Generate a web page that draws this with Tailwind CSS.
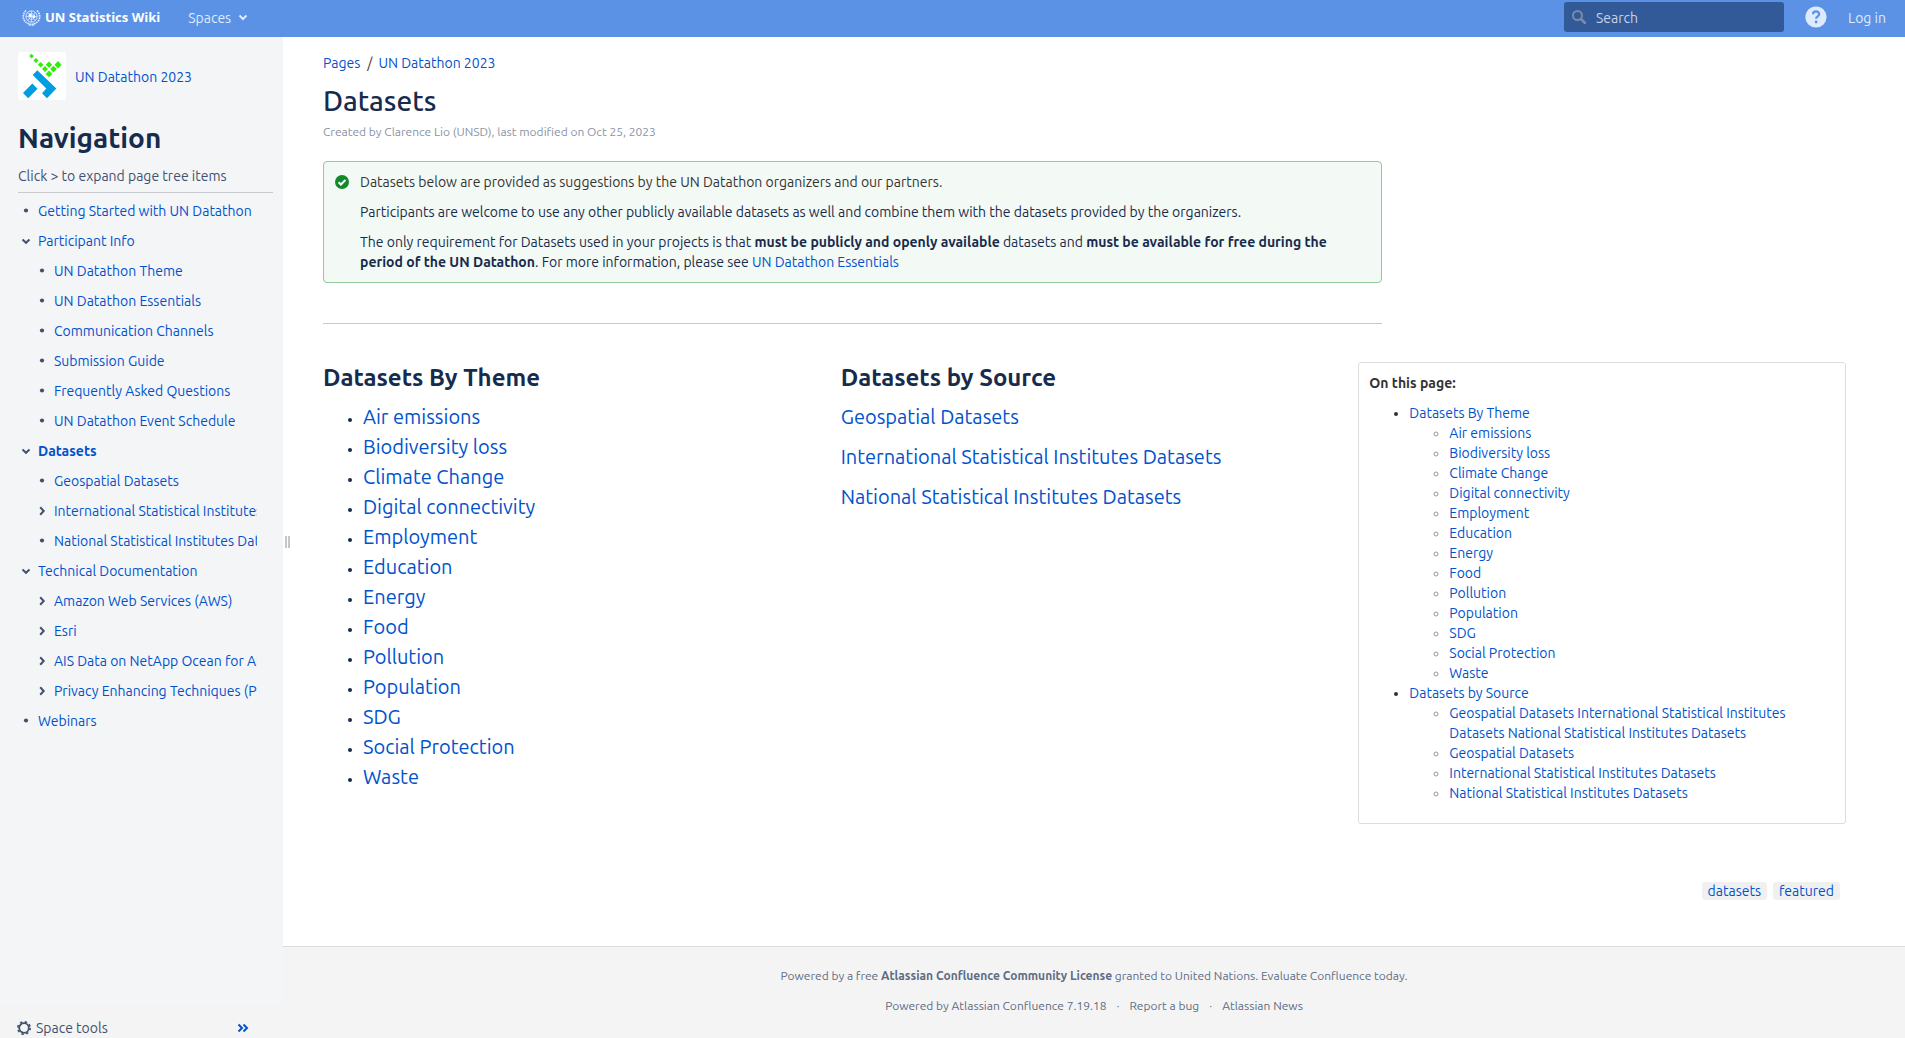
<!DOCTYPE html>
<html lang="en">
<head>
<meta charset="utf-8">
<title>Datasets - UN Datathon 2023 - UN Statistics Wiki</title>
<script src="https://cdn.jsdelivr.net/npm/@tailwindcss/browser@4"></script>
</head>
<body class="flex min-h-screen flex-col bg-white font-['Ubuntu','Noto_Sans',sans-serif] text-sm leading-5 text-[#172b4d]">

<svg class="hidden" aria-hidden="true">
  <symbol id="down" viewBox="0 0 10 10"><path d="M1.5 3.5 5 6.8 8.5 3.5" fill="none" stroke="currentColor" stroke-width="2"/></symbol>
  <symbol id="right" viewBox="0 0 10 10"><path d="M3.2 1.2 6.700 5 3.2 8.8" fill="none" stroke="currentColor" stroke-width="2"/></symbol>
  <symbol id="dot" viewBox="0 0 10 10"><circle cx="5" cy="4.5" r="2.1" fill="currentColor"/></symbol>
</svg>

<header class="flex h-[37px] items-center bg-[#5b92e5] text-[#deebff]">
  <a href="#" class="mb-[3px] flex items-center gap-1 pl-[22px] font-['Open_Sans',sans-serif] text-[13px] font-bold text-white">
    <svg class="h-[17px] w-[19px]" viewBox="0 0 19 17" fill="none" stroke="#deebff" aria-hidden="true">
      <circle cx="9.5" cy="7.5" r="5.6"/><circle cx="9.5" cy="7.5" r="3" stroke-width=".8"/>
      <path d="M9.500 2v11M4 7.500h11M5.500 3.500l8 8M13.500 3.500l-8 8" stroke-width=".7"/>
      <path d="M7 4.500l3 1-1 3-2-1zM10.500 7.500l2-2 .8 3-1.800 1z" fill="#fff" stroke="none"/>
      <path d="M4 1.500C-.5 6 .5 13 7.500 15M15 1.500c4.500 4.500 3.500 11.500-3.500 13.500M7.500 15l5 1.500M11.500 15l-5 1.500" stroke-width="1.600" stroke-dasharray="1.800 .7"/>
    </svg>
    UN Statistics Wiki
  </a>
  <button type="button" class="mb-[2px] ml-7 flex items-center gap-1.5">Spaces
    <svg class="size-3" viewBox="0 0 12 12" aria-hidden="true"><path d="M2.500 3.500 6 7l3.500-3.500" fill="none" stroke="currentColor" stroke-width="2"/></svg>
  </button>
  <form class="mr-[21px] mb-[3px] ml-auto flex h-[30px] w-[220px] items-center gap-[10px] rounded-[3px] bg-[#325a98] pl-2">
    <svg class="size-[14px] shrink-0 text-[#7c8ba3]" viewBox="0 0 14 14" fill="none" stroke="currentColor" stroke-width="2" aria-hidden="true"><circle cx="5.500" cy="5.500" r="4.500"/><path d="m9 9 4 4" stroke-width="2.500" stroke-linecap="round"/></svg>
    <input type="search" aria-label="Search" placeholder="Search" class="mt-[2px] w-full bg-transparent outline-none placeholder:text-[#c5d3ea]">
  </form>
  <button type="button" aria-label="Help" class="mb-[3px]">
    <svg class="size-[22px]" viewBox="0 0 22 22" aria-hidden="true"><circle cx="11" cy="11" r="10.600" fill="#deebff"/><path d="M8 8.300C8 6.300 9.300 5.300 11 5.300s3.200 1 3.200 2.700c0 2.400-3.100 2.400-3.100 4.800" fill="none" stroke="#5b92e5" stroke-width="2.200"/><circle cx="11.100" cy="16" r="1.400" fill="#5b92e5"/></svg>
  </button>
  <a href="#" class="mr-[19px] mb-[2px] ml-[21px]">Log in</a>
</header>

<div class="flex grow">
  <aside class="flex w-[283px] shrink-0 flex-col bg-[#f4f5f7]">
    <div class="grow px-[18px] pt-[15px]">
      <a href="#" class="flex items-center gap-[9px] text-[#0052cc]">
        <svg class="size-12 rounded-[3px] bg-white" viewBox="18 52 48 48" aria-hidden="true">
          <g fill="#33ec0c"><path d="m31.500 53.800 2.300 2.300-2.300 2.300-2.300-2.300zM36 58l2.500 2.500L36 63l-2.500-2.500zM40.700 62l2.800 2.800-2.800 2.800-2.800-2.800zM45 66l3 3-3 3-3-3zM49 70.500l3.400 3.400-3.400 3.400-3.400-3.400zM49 61.500l3.200 3.200-3.200 3.200-3.200-3.200zM53.500 65.800l3.300 3.300-3.300 3.300-3.300-3.300zM58 61l3.500 3.700-3.500 3.700-3.500-3.700z"/></g>
          <path d="M37.300 70.200 56.300 88.500 47 98.200 42 93.200 46.300 88.500 32.700 75zM32.300 83.500 37.500 88.800 28.200 98.200 23 93z" fill="#009ee0"/>
        </svg>
        <span class="pt-[2px]">UN Datathon 2023</span>
      </a>
      <h2 class="mt-[22px] text-[28px] leading-8 font-bold">Navigation</h2>
      <p class="mt-3 mr-[-8px] border-b border-[#c8cacd] pb-[6px] text-[#42526e]">Click &gt; to expand page tree items</p>
      <nav class="mr-2 overflow-hidden pt-[3px] pl-[3px] text-[#42526e]" aria-label="Page tree">
        <ul id="tree" class="whitespace-nowrap"></ul>
      </nav>
    </div>
    <div class="flex h-[33px] items-center bg-[#f4f4f4] pt-3 pr-[34px] pl-[17px] text-[#42526e]">
      <button type="button" class="flex items-center gap-[5px]">
        <svg class="size-[14px]" viewBox="0 0 14 14" fill="none" stroke="currentColor" aria-hidden="true"><circle cx="7" cy="7" r="4.800" stroke-width="1.800"/><circle cx="7" cy="7" r="6.200" stroke-width="1.600" stroke-dasharray="2.400 2.470"/></svg>
        Space tools
      </button>
      <button type="button" aria-label="Collapse sidebar" class="ml-auto text-[#0052cc]">
        <svg class="h-[10px] w-3" viewBox="0 0 12 10" fill="none" stroke="currentColor" stroke-width="2" aria-hidden="true"><path d="M1.500 1.500 5 5 1.500 8.500M6.500 1.500 10 5 6.500 8.500"/></svg>
      </button>
    </div>
  </aside>

  <div class="relative flex min-w-0 grow flex-col">
    <div class="absolute top-[499px] left-[2px] h-3 w-[5px] border-x-2 border-[#c1c7d0]" role="separator" aria-orientation="vertical"></div>

    <main class="pt-4 pr-[59px] pl-10">
      <nav class="flex text-[#0052cc]" aria-label="Breadcrumb"><a href="#">Pages</a><span class="pr-[6px] pl-[7px] text-[#333]">/</span><a href="#">UN Datathon 2023</a></nav>
      <h1 class="mt-3 text-[28px] leading-8 font-medium">Datasets</h1>
      <p class="mt-[5px] text-xs leading-5 text-[#8993a4]">Created by Clarence Lio (UNSD), last modified on Oct 25, 2023</p>

      <div class="mt-[19px] flex max-w-[1059px] gap-[11px] rounded border border-[#91c89c] bg-[#f3f9f4] py-[10px] pr-[30px] pl-[11px]">
        <svg class="mt-[3px] size-[14px] shrink-0" viewBox="0 0 14 14" aria-hidden="true"><circle cx="7" cy="7" r="7" fill="#14892c"/><path d="m3.600 7.200 2.300 2.300 4.500-4.500" fill="none" stroke="#fff" stroke-width="2"/></svg>
        <div class="space-y-[10px]">
          <p class="text-[#333]">Datasets below are provided as suggestions by the UN Datathon organizers and our partners.</p>
          <p>Participants are welcome to use any other publicly available datasets as well and combine them with the datasets provided by the organizers.</p>
          <p>The only requirement for Datasets used in your projects is that <strong>must be publicly and openly available</strong> datasets and <strong>must be available for free during the period of the UN Datathon</strong>. For more information, please see <a href="#" class="text-[#0052cc]">UN Datathon Essentials</a></p>
        </div>
      </div>
      <hr class="mt-10 max-w-[1059px] border-[#c8c8c8]">

      <div class="mt-[38px] grid grid-cols-3 items-start gap-[30px]">
        <section>
          <h2 class="text-2xl leading-8 font-bold">Datasets By Theme</h2>
          <ul id="themes" class="mt-2 list-disc pl-10"></ul>
        </section>
        <section>
          <h2 class="text-2xl leading-8 font-bold">Datasets by Source</h2>
          <div class="mt-2 flex flex-col gap-[10px] text-xl leading-[30px] text-[#0052cc]">
            <a href="#">Geospatial Datasets</a>
            <a href="#">International Statistical Institutes Datasets</a>
            <a href="#">National Statistical Institutes Datasets</a>
          </div>
        </section>
        <section class="rounded-[3px] border border-[#ddd] px-[10px] pt-[10px] pb-5 text-[#333]">
          <h2 class="font-bold">On this page:</h2>
          <ul class="mt-[10px] list-disc pl-10">
            <li><a href="#" class="text-[#0052cc]">Datasets By Theme</a><ul id="toc-themes" class="list-[circle] pl-10 marker:text-[#999]"></ul></li>
            <li><a href="#" class="text-[#0052cc]">Datasets by Source</a><ul id="toc-sources" class="list-[circle] pl-10 marker:text-[#999]"></ul></li>
          </ul>
        </section>
      </div>

      <ul class="mt-[58px] mr-[6px] mb-[46px] flex justify-end gap-[6px] leading-[18px] text-[#0052cc]">
        <li class="rounded-[3px] bg-[#f0f0f0] px-[6px]"><a href="#">datasets</a></li>
        <li class="rounded-[3px] bg-[#f0f0f0] px-[6px]"><a href="#">featured</a></li>
      </ul>
    </main>

    <footer class="flex grow flex-col items-center gap-[10px] border-t border-[#ddd] bg-[#f4f4f4] pt-[19px] text-xs leading-5 text-[#5e6c84]">
      <p>Powered by a free <strong>Atlassian Confluence Community License</strong> granted to United Nations. <a href="#">Evaluate Confluence today</a>.</p>
      <ul class="flex">
        <li><a href="#">Powered by Atlassian Confluence 7.19.18</a></li>
        <li><span class="px-[10px]">·</span><a href="#">Report a bug</a></li>
        <li><span class="px-[10px]">·</span><a href="#">Atlassian News</a></li>
      </ul>
    </footer>
  </div>
</div>

<script>
  const themes = ["Air emissions", "Biodiversity loss", "Climate Change", "Digital connectivity", "Employment", "Education", "Energy", "Food", "Pollution", "Population", "SDG", "Social Protection", "Waste"];
  const sources = ["Geospatial Datasets International Statistical Institutes Datasets National Statistical Institutes Datasets", "Geospatial Datasets", "International Statistical Institutes Datasets", "National Statistical Institutes Datasets"];
  // [level, icon, title]
  const tree = [
    [0, "dot", "Getting Started with UN Datathon"],
    [0, "down", "Participant Info"],
    [1, "dot", "UN Datathon Theme"],
    [1, "dot", "UN Datathon Essentials"],
    [1, "dot", "Communication Channels"],
    [1, "dot", "Submission Guide"],
    [1, "dot", "Frequently Asked Questions"],
    [1, "dot", "UN Datathon Event Schedule"],
    [0, "down", "Datasets"],
    [1, "dot", "Geospatial Datasets"],
    [1, "right", "International Statistical Institutes Datasets"],
    [1, "dot", "National Statistical Institutes Datasets"],
    [0, "down", "Technical Documentation"],
    [1, "right", "Amazon Web Services (AWS)"],
    [1, "right", "Esri"],
    [1, "right", "AIS Data on NetApp Ocean for AIS"],
    [1, "right", "Privacy Enhancing Techniques (PETs)"],
    [0, "dot", "Webinars"]
  ];
  const fill = (id, html) => { document.getElementById(id).innerHTML = html; };
  fill("tree", tree.map(([level, icon, title]) =>
    `<li class="flex h-[30px] items-center gap-[7px] ${level ? "pl-4" : ""}"><svg class="size-[10px] shrink-0" aria-hidden="true"><use href="#${icon}"/></svg><a href="#" class="text-[#0052cc] ${title === "Datasets" ? "font-bold" : ""}">${title}</a></li>`).join(""));
  fill("themes", themes.map(t => `<li><a href="#" class="text-xl leading-[30px] text-[#0052cc]">${t}</a></li>`).join(""));
  const link = t => `<li><a href="#" class="text-[#0052cc]">${t}</a></li>`;
  fill("toc-themes", themes.map(link).join(""));
  fill("toc-sources", sources.map(link).join(""));
</script>
</body>
</html>
